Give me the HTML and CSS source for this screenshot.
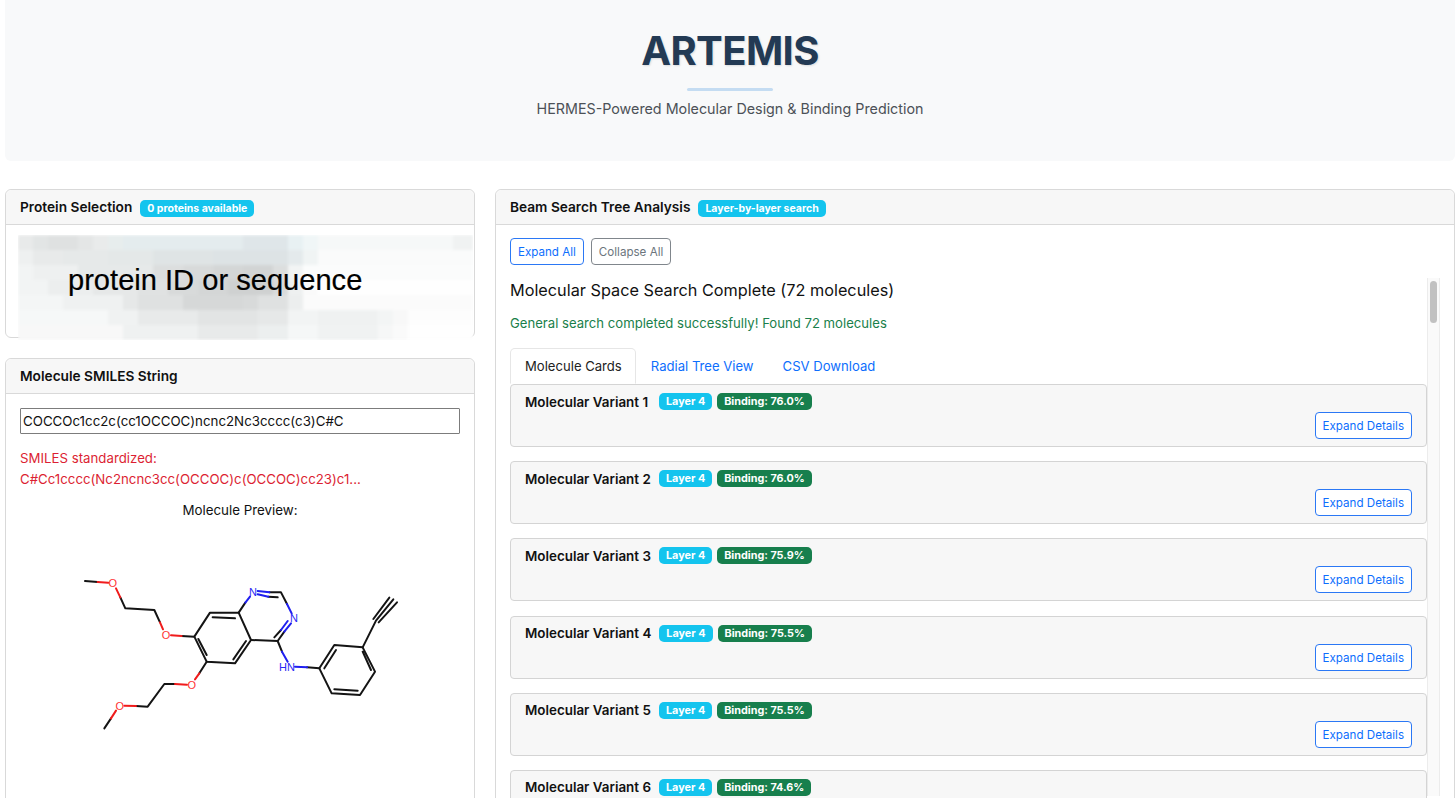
FILE: index.html
```html
<!DOCTYPE html>
<html lang="en">
<head>
<meta charset="utf-8">
<title>ARTEMIS</title>
<link rel="stylesheet" href="styles.css">
</head>
<body>
<header class="hero">
  <h1 class="hero-title">ARTEMIS</h1>
  <div class="hero-rule"></div>
  <p class="hero-sub">HERMES-Powered Molecular Design &amp; Binding Prediction</p>
</header>
<main class="layout">
  <section class="col-left">
    <div class="card protein-card">
      <div class="card-head"><span class="head-title">Protein Selection</span><span class="badge info">0 proteins available</span></div>
      <div class="mosaic">
        <svg class="mosaic-svg" viewBox="0 0 455 105" shape-rendering="crispEdges">
          <g>
            <rect x="0" y="0" width="15" height="15" fill="#e8eaea"/><rect x="15" y="0" width="15" height="15" fill="#e2e5e5"/><rect x="30" y="0" width="30" height="15" fill="#dfe1e1"/><rect x="60" y="0" width="15" height="15" fill="#e4e6e6"/><rect x="75" y="0" width="15" height="15" fill="#e9ebeb"/><rect x="90" y="0" width="15" height="15" fill="#e7eded"/><rect x="105" y="0" width="120" height="15" fill="#e4ecee"/><rect x="225" y="0" width="45" height="15" fill="#dfe6e9"/><rect x="270" y="0" width="15" height="15" fill="#e8f1f3"/><rect x="285" y="0" width="15" height="15" fill="#f0f6f7"/><rect x="300" y="0" width="135" height="15" fill="#f6f8f8"/><rect x="435" y="0" width="20" height="15" fill="#f0f2f2"/>
          </g>
          <g>
            <rect x="0" y="15" width="15" height="15" fill="#eef0f0"/><rect x="15" y="15" width="30" height="15" fill="#e8eaea"/><rect x="45" y="15" width="45" height="15" fill="#e6e9e9"/><rect x="90" y="15" width="45" height="15" fill="#e4e8e8"/><rect x="135" y="15" width="60" height="15" fill="#dfe4e5"/><rect x="195" y="15" width="75" height="15" fill="#dde3e5"/><rect x="270" y="15" width="15" height="15" fill="#e4eaec"/><rect x="285" y="15" width="15" height="15" fill="#f0f4f4"/><rect x="300" y="15" width="155" height="15" fill="#fafbfb"/>
          </g>
          <g>
            <rect x="0" y="30" width="15" height="15" fill="#f2f4f4"/><rect x="15" y="30" width="45" height="15" fill="#eef0f0"/><rect x="60" y="30" width="75" height="15" fill="#e6e9e9"/><rect x="135" y="30" width="30" height="15" fill="#dcdede"/><rect x="165" y="30" width="30" height="15" fill="#d8dada"/><rect x="195" y="30" width="30" height="15" fill="#d4d6d6"/><rect x="225" y="30" width="30" height="15" fill="#d2d4d4"/><rect x="255" y="30" width="15" height="15" fill="#dcdede"/><rect x="270" y="30" width="15" height="15" fill="#f2f4f4"/><rect x="285" y="30" width="170" height="15" fill="#fbfcfc"/>
          </g>
          <g>
            <rect x="0" y="45" width="30" height="15" fill="#f2f4f4"/><rect x="30" y="45" width="45" height="15" fill="#eceeee"/><rect x="75" y="45" width="45" height="15" fill="#e6e8e8"/><rect x="120" y="45" width="30" height="15" fill="#e0e2e2"/><rect x="150" y="45" width="30" height="15" fill="#d8dada"/><rect x="180" y="45" width="30" height="15" fill="#d4d6d6"/><rect x="210" y="45" width="45" height="15" fill="#cfd1d1"/><rect x="255" y="45" width="15" height="15" fill="#d8dada"/><rect x="270" y="45" width="15" height="15" fill="#eef0f0"/><rect x="285" y="45" width="15" height="15" fill="#fafafa"/><rect x="300" y="45" width="155" height="15" fill="#fefefe"/>
          </g>
          <g>
            <rect x="0" y="60" width="45" height="15" fill="#f4f6f6"/><rect x="45" y="60" width="60" height="15" fill="#eff1f1"/><rect x="105" y="60" width="15" height="15" fill="#e6e8e8"/><rect x="120" y="60" width="45" height="15" fill="#dfe1e1"/><rect x="165" y="60" width="60" height="15" fill="#d6d8d8"/><rect x="225" y="60" width="15" height="15" fill="#d8dada"/><rect x="240" y="60" width="30" height="15" fill="#dfe1e1"/><rect x="270" y="60" width="15" height="15" fill="#eceeee"/><rect x="285" y="60" width="170" height="15" fill="#fbfbfb"/>
          </g>
          <g>
            <rect x="0" y="75" width="90" height="15" fill="#f6f8f8"/><rect x="90" y="75" width="30" height="15" fill="#f0f2f2"/><rect x="120" y="75" width="60" height="15" fill="#e8eaea"/><rect x="180" y="75" width="60" height="15" fill="#e2e4e4"/><rect x="240" y="75" width="30" height="15" fill="#e6e8e8"/><rect x="270" y="75" width="30" height="15" fill="#f2f4f4"/><rect x="300" y="75" width="60" height="15" fill="#eff1f1"/><rect x="360" y="75" width="15" height="15" fill="#f3f5f5"/><rect x="375" y="75" width="15" height="15" fill="#f8f8f8"/><rect x="390" y="75" width="65" height="15" fill="#fdfdfd"/>
          </g>
          <g>
            <rect x="0" y="90" width="105" height="15" fill="#f8f8f8"/><rect x="105" y="90" width="75" height="15" fill="#eff1f1"/><rect x="180" y="90" width="60" height="15" fill="#e8eaea"/><rect x="240" y="90" width="30" height="15" fill="#ecefef"/><rect x="270" y="90" width="30" height="15" fill="#f5f7f7"/><rect x="300" y="90" width="60" height="15" fill="#f0f2f2"/><rect x="360" y="90" width="15" height="15" fill="#f6f7f7"/><rect x="375" y="90" width="15" height="15" fill="#fafafa"/><rect x="390" y="90" width="65" height="15" fill="#fefefe"/>
          </g>
        </svg>
        <span class="mosaic-text">protein ID or sequence</span>
      </div>
    </div>
    <div class="card smiles-card">
      <div class="card-head"><span class="head-title">Molecule SMILES String</span></div>
      <div class="card-body">
        <input class="smiles-input" type="text" value="COCCOc1cc2c(cc1OCCOC)ncnc2Nc3cccc(c3)C#C">
        <p class="smiles-msg">SMILES standardized:<br>C#Cc1cccc(Nc2ncnc3cc(OCCOC)c(OCCOC)cc23)c1...</p>
        <p class="preview-label">Molecule Preview:</p>
        <svg class="molecule" viewBox="0 0 1080 540" role="img" aria-label="Molecule structure">
          <g class="bond-k">
            <path d="M72 63L110 66M178 112L193 145L280 150L297 187M362 228L400 230M225 438L260 440L310 372L342 372M415 340L437 305M130 505L150 475"/>
            <path d="M400 230L447 158L533 158L570 240L522 310L437 305L400 230M455 172L522 175M555 243L517 298M437 285L412 237"/>
            <path d="M533 158L553 128M625 97L660 97L678 132M622 110L650 112M670 215L650 243L570 240M660 210L640 232M650 243L663 275M738 322L775 325"/>
            <path d="M775 325L820 255L905 262L942 335L897 405L812 400L775 325M790 325L825 270M905 275L930 330M890 392L820 388"/>
            <path d="M905 262L945 182M937 177L985 113M945 182L997 118M953 187L1008 127"/>
          </g>
          <g class="bond-r">
            <path d="M110 66L142 68M165 85L178 112M297 187L306 208M330 226L362 228M415 340L402 358M378 374L342 372M225 438L190 437M165 452L150 475"/>
          </g>
          <g class="bond-b">
            <path d="M553 128L567 110M590 93L625 97M590 103L622 110M678 132L692 160M690 190L670 215M680 183L660 210M663 275L680 305M702 320L738 322"/>
          </g>
          <g class="atom-r">
            <text x="155" y="82">O</text><text x="315" y="236">O</text><text x="392" y="387">O</text><text x="176" y="449">O</text>
          </g>
          <g class="atom-b">
            <text x="576" y="107">N</text><text x="699" y="187">N</text><text x="678" y="332">HN</text>
          </g>
        </svg>
      </div>
    </div>
  </section>
  <section class="card col-right">
    <div class="card-head"><span class="head-title">Beam Search Tree Analysis</span><span class="badge info">Layer-by-layer search</span></div>
    <div class="card-body right-body">
      <div class="btn-row">
        <button class="btn btn-blue">Expand All</button>
        <button class="btn btn-grey">Collapse All</button>
      </div>
      <div class="scroller">
        <div class="scroll-content">
          <h2 class="result-title">Molecular Space Search Complete (72 molecules)</h2>
          <p class="result-msg">General search completed successfully! Found 72 molecules</p>
          <nav class="tabs">
            <span class="tab active">Molecule Cards</span>
            <span class="tab">Radial Tree View</span>
            <span class="tab">CSV Download</span>
          </nav>
          <div class="variant"><div class="variant-head"><span class="variant-name">Molecular Variant 1</span><span class="badge info">Layer 4</span><span class="badge good">Binding: 76.0%</span></div><div class="variant-foot"><button class="btn btn-blue">Expand Details</button></div></div>
          <div class="variant"><div class="variant-head"><span class="variant-name">Molecular Variant 2</span><span class="badge info">Layer 4</span><span class="badge good">Binding: 76.0%</span></div><div class="variant-foot"><button class="btn btn-blue">Expand Details</button></div></div>
          <div class="variant"><div class="variant-head"><span class="variant-name">Molecular Variant 3</span><span class="badge info">Layer 4</span><span class="badge good">Binding: 75.9%</span></div><div class="variant-foot"><button class="btn btn-blue">Expand Details</button></div></div>
          <div class="variant"><div class="variant-head"><span class="variant-name">Molecular Variant 4</span><span class="badge info">Layer 4</span><span class="badge good">Binding: 75.5%</span></div><div class="variant-foot"><button class="btn btn-blue">Expand Details</button></div></div>
          <div class="variant"><div class="variant-head"><span class="variant-name">Molecular Variant 5</span><span class="badge info">Layer 4</span><span class="badge good">Binding: 75.5%</span></div><div class="variant-foot"><button class="btn btn-blue">Expand Details</button></div></div>
          <div class="variant"><div class="variant-head"><span class="variant-name">Molecular Variant 6</span><span class="badge info">Layer 4</span><span class="badge good">Binding: 74.6%</span></div><div class="variant-foot"><button class="btn btn-blue">Expand Details</button></div></div>
        </div>
        <div class="scroll-track"><div class="scroll-thumb"></div></div>
      </div>
    </div>
  </section>
</main>
</body>
</html>
```
FILE: styles.css
```css
* { box-sizing: border-box; }
html, body { height: 100%; }
body {
  margin: 0;
  height: 798px;
  overflow: hidden;
  padding: 0 1px 0 5px;
  background: #fff;
  color: #000;
  font-family: Inter, "Liberation Sans", sans-serif;
  font-size: 14px;
}
.hero {
  height: 161px;
  background: #f8f9fa;
  border-radius: 0 0 6px 6px;
  padding-top: 27px;
  text-align: center;
  margin-bottom: 28px;
}
.hero-title {
  margin: 0;
  font-size: 40px;
  line-height: 48px;
  font-weight: 700;
  letter-spacing: -0.6px;
  color: #233a54;
  text-shadow: 1px 1px 2px rgba(0,0,0,.12);
}
.hero-rule {
  width: 86px;
  height: 3px;
  margin: 13px auto 0;
  background: #c4dcf2;
  border-radius: 2px;
}
.hero-sub {
  margin: 3px 0 0;
  font-size: 14.3px;
  line-height: 30px;
  color: #4c5157;
}
.layout {
  display: grid;
  grid-template-columns: 470px 960px;
  column-gap: 20px;
  align-items: start;
}
.col-left { display: flex; flex-direction: column; gap: 20px; }
.card {
  border: 1px solid #d9d9d9;
  border-radius: 6px;
  background: #fff;
}
.card-head {
  height: 35px;
  padding: 0 14px;
  display: flex;
  align-items: center;
  gap: 8px;
  background: #f7f7f7;
  border-bottom: 1px solid #d9d9d9;
  border-radius: 6px 6px 0 0;
}
.head-title { font-size: 13.7px; font-weight: 600; color: #111; }
.badge {
  display: inline-block;
  padding: 0 7px;
  height: 17px;
  line-height: 17px;
  border-radius: 5px;
  font-size: 10.5px;
  font-weight: 700;
  color: #fff;
  white-space: nowrap;
}
.card-head .badge { margin-top: 2px; }
.badge.info { background: #14c4ee; }
.badge.good { background: #177f4d; }
.protein-card { height: 149px; }
.mosaic {
  position: relative;
  width: 455px;
  height: 105px;
  margin: 10px 0 0 12px;
  overflow: hidden;
}
.mosaic-svg { display: block; width: 455px; height: 105px; filter: blur(1.5px); }
.mosaic-text {
  position: absolute;
  left: 50px;
  top: 27px;
  font-family: "Liberation Sans", Arial, sans-serif;
  font-size: 29.1px;
  line-height: 36px;
  color: #000;
  -webkit-text-stroke: 0.2px #000;
}
.smiles-card { height: 460px; }
.card-body { padding: 14px; }
.smiles-input {
  display: block;
  width: 440px;
  height: 26px;
  padding: 0 2px;
  border: 1px solid #7c7c7c;
  border-radius: 1px;
  font-family: Inter, "Liberation Sans", sans-serif;
  font-size: 13.3px;
  color: #111;
  background: #fff;
}
.smiles-msg {
  margin: 14px 0 0;
  font-size: 13.25px;
  line-height: 21px;
  color: #dc1f33;
}
.preview-label {
  margin: 10px 0 0;
  text-align: center;
  font-size: 13.35px;
  line-height: 20px;
  color: #111;
}
.molecule {
  display: block;
  width: 360px;
  height: 180px;
  margin: 40px 0 0 41px;
}
.bond-k path, .bond-r path, .bond-b path { fill: none; stroke-width: 6; stroke-linecap: round; stroke-linejoin: round; }
.bond-k path { stroke: #141414; }
.bond-r path { stroke: #f01c1c; }
.bond-b path { stroke: #1f1ff0; }
.atom-r text, .atom-b text { font-family: "Liberation Sans", sans-serif; font-size: 33px; text-anchor: middle; }
.atom-r text { fill: #f33; }
.atom-b text { fill: #2a2af5; }
.col-right { height: 640px; }
.right-body { padding: 13px 14px 0; }
.btn {
  display: inline-block;
  height: 27px;
  padding: 1px 7px 0;
  border-radius: 4px;
  background: #fff;
  font-family: Inter, "Liberation Sans", sans-serif;
  font-size: 11.6px;
  line-height: 24px;
  white-space: nowrap;
}
.btn-blue { border: 1px solid #2b78f5; color: #0d6efd; }
.btn-grey { border: 1px solid #80868c; color: #6c757d; }
.btn-row { display: flex; gap: 7px; }
.scroller { display: flex; margin-top: 13px; height: 520px; }
.scroll-content { width: 919px; }
.result-title {
  margin: 0;
  font-size: 16.25px;
  line-height: 24px;
  font-weight: 400;
  color: #111;
}
.result-msg {
  margin: 11px 0 0;
  font-size: 13.13px;
  line-height: 20px;
  color: #1a7f4b;
}
.tabs { display: flex; margin-top: 15px; height: 36px; }
.tab {
  padding: 0 13px 0 14px;
  line-height: 35px;
  font-size: 13.1px;
  color: #0d6efd;
  border: 1px solid transparent;
  white-space: nowrap;
}
.tab.active {
  color: #222;
  border-color: #e6e6e6 #e6e6e6 transparent;
  border-radius: 5px 5px 0 0;
  background: #fff;
}
.variant {
  height: 63px;
  margin-bottom: 14.2px;
  padding: 7px 14px 0;
  background: #f7f7f7;
  border: 1px solid #d4d4d4;
  border-radius: 4px;
}
.variant-head { display: flex; align-items: center; gap: 5px; height: 19px; }
.variant-head .badge { font-size: 10.8px; }
.variant-name { min-width: 126px; font-size: 13.4px; font-weight: 600; color: #111; margin-right: 3px; }
.variant-foot { display: flex; justify-content: flex-end; margin-top: 1px; }
.scroll-track {
  flex: none;
  width: 13px;
  height: 518px;
  padding: 3px 2px;
  background: #fafafa;
  border-left: 1px solid #ececec;
  border-right: 1px solid #ececec;
}
.scroll-thumb { width: 7px; height: 42px; border-radius: 4px; background: #c1c1c1; }
```
